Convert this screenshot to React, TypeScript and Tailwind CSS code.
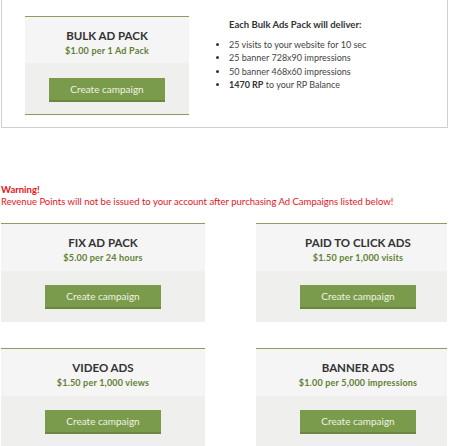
import React from 'react';

type Pack = { title: string; price: string };

const packs: Pack[] = [
  { title: 'FIX AD PACK', price: '$5.00 per 24 hours' },
  { title: 'PAID TO CLICK ADS', price: '$1.50 per 1,000 visits' },
  { title: 'VIDEO ADS', price: '$1.50 per 1,000 views' },
  { title: 'BANNER ADS', price: '$1.00 per 5,000 impressions' },
];

function CampaignButton() {
  return (
    <button className="w-[116px] h-[24px] bg-[#7b9b4c] border-b-2 border-[#6a8740] text-[10px] text-[#eef3e2] leading-none">
      Create campaign
    </button>
  );
}

function PackCard({ title, price, width }: Pack & { width: string }) {
  return (
    <div className={`${width} shrink-0 border-t border-[#87a061]`}>
      <div className="h-[47px] bg-[#f5f5f5] flex flex-col items-center pt-[11px]">
        <div className="text-[11.5px] font-bold text-[#333] leading-[15px]">{title}</div>
        <div className="text-[9px] font-bold text-[#5f7f33] leading-[13px] mt-px tracking-[0.2px]">{price}</div>
      </div>
      <div className="bg-[#efefed] flex justify-center pt-[14px] pb-[13px]">
        <CampaignButton />
      </div>
    </div>
  );
}

export default function App() {
  return (
    <div className="bg-white w-[462px] h-[446px] overflow-hidden pl-px" style={{ fontFamily: 'Lato, "Open Sans", "Liberation Sans", sans-serif' }}>
      {/* bulk pack box */}
      <div className="w-[447px] h-[128px] border-x border-b border-[#cfcfcf] flex pl-[23px] pt-[16px]">
        <div className="w-[164px] shrink-0 border-t border-b border-[#87a061] self-start">
          <div className="h-[46px] bg-[#f5f5f5] flex flex-col items-center pt-[11px]">
            <div className="text-[11.5px] font-bold text-[#333] leading-[15px]">BULK AD PACK</div>
            <div className="text-[9px] font-bold text-[#5f7f33] leading-[13px] mt-px tracking-[0.2px]">$1.00 per 1 Ad Pack</div>
          </div>
          <div className="bg-[#efefed] flex justify-center pt-[15px] pb-[12px]">
            <CampaignButton />
          </div>
        </div>
        <div className="ml-[40px] pt-[2px] text-[#333]">
          <div className="text-[9.5px] font-bold leading-[13px]">Each Bulk Ads Pack will deliver:</div>
          <ul className="list-disc pl-0 mt-[7px] text-[9px] leading-[13.4px] text-[#444] marker:text-[#333]">
            <li>25 visits to your website for 10 sec</li>
            <li>25 banner 728x90 impressions</li>
            <li>50 banner 468x60 impressions</li>
            <li>
              <b className="font-bold text-[#333]">1470 RP</b> to your RP Balance
            </li>
          </ul>
        </div>
      </div>

      {/* warning */}
      <div className="mt-[56px] text-[9.5px] leading-[12px] text-[#e8141c]">
        <div className="font-bold">Warning!</div>
        <div>Revenue Points will not be issued to your account after purchasing Ad Campaigns listed below!</div>
      </div>

      {/* campaign cards */}
      <div className="w-[446px] overflow-hidden mt-[15px]">
        <div className="grid grid-cols-[204px_204px] gap-x-[51px] gap-y-[26px]">
          {packs.map((p) => (
            <PackCard key={p.title} title={p.title} price={p.price} width="w-[204px]" />
          ))}
        </div>
      </div>
    </div>
  );
}
